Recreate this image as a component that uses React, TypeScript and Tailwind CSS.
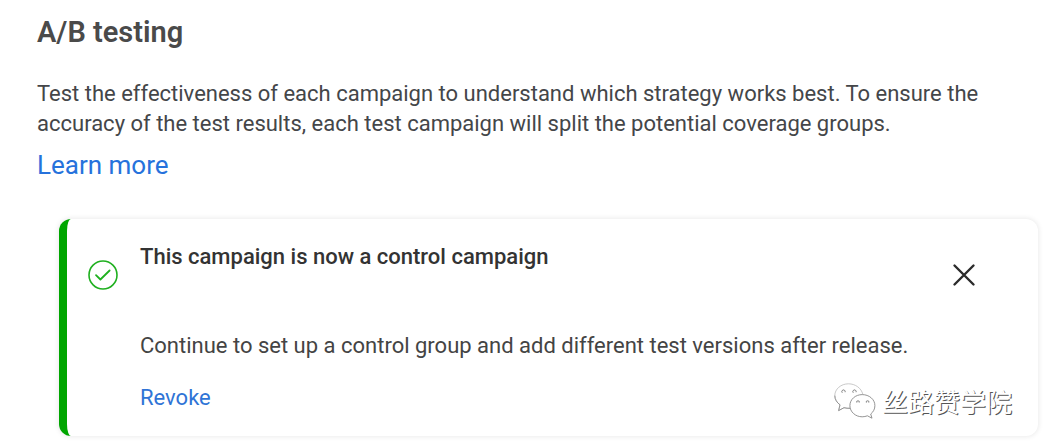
const Watermark = () => (
  <div className="pointer-events-none absolute right-[26px] bottom-[17px] flex items-center gap-1.5">
    <svg className="h-9 w-[42px]" viewBox="0 0 42 36" fill="#ffffff" aria-hidden="true">
      <path
        d="M28.800 11.200C27.300 5.200 21.400 0.800 14.500 0.800 7 0.800 0.800 6 0.800 12.600c0 3.800 2.100 7 5.200 9.200L4.600 27.600l5.400-2.900c1.900.500 4 .7 6 .6"
        stroke="#bbbbbb"
        strokeWidth="0.8"
      />
      <path d="M0.800 12.600c0 3.800 2.100 7 5.200 9.200L4.600 27.600l5.400-2.900c1.900.500 4 .7 6 .6" fill="none" stroke="#888888" strokeWidth="0.8" />
      <path
        d="M28.200 11.600c-6.800 0-12.300 4.800-12.300 11s5.500 11.200 12.300 11.200c1.800 0 3.600-.4 5.200-1l4.600 2.400-1.300-4.200c2.600-2 4.200-5 4.200-8.400 0-6.200-5.700-11-12.700-11z"
        stroke="#888888"
        strokeWidth="0.9"
      />
      <path
        d="M8.300 9.800a1.700 1.700 0 1 1 2.800-.6M19.300 9.800a1.700 1.700 0 1 1 2.800-.6M22.800 19.600a1.300 1.300 0 1 1 2.400 0M32.400 19.600a1.300 1.300 0 1 1 2.400 0"
        fill="none"
        stroke="#666666"
        strokeWidth="0.8"
      />
    </svg>
    <span className="font-['Noto_Sans_CJK_SC',sans-serif] text-[26px] leading-9 text-white [text-shadow:1px_1px_0_#555555]">
      丝路赞学院
    </span>
  </div>
);

const ControlCampaignNotice = () => (
  <section className="relative mt-9 mr-[7px] ml-[59px] flex items-start rounded-xl border-l-8 border-[#00a600] bg-white pt-[23px] pr-[62px] pb-[23px] pl-[21px] shadow-[0_0_5px_1px_rgba(0,0,0,0.08)]">
    <svg className="mt-[18px] size-[30px] shrink-0" viewBox="0 0 30 30" fill="none" stroke="#1fb01f" aria-hidden="true">
      <circle cx="15" cy="15" r="14" strokeWidth="1.6" />
      <path d="M8 15.2l4.4 4.3 9.2-9" strokeWidth="1.8" strokeLinecap="round" strokeLinejoin="round" />
    </svg>
    <div className="ml-[22px] min-w-0 flex-1">
      <h2 className="font-medium text-[#333333]">This campaign is now a control campaign</h2>
      <p className="mt-[59px] text-[#444444]">
        Continue to set up a control group and add different test versions after release.
      </p>
      <button type="button" className="mt-[22px] block text-[#2f74d6]">
        Revoke
      </button>
    </div>
    <button type="button" aria-label="Close" className="mt-[21px] shrink-0">
      <svg className="size-6" viewBox="0 0 24 24" fill="none" stroke="#2b2b2b" strokeWidth="2.4" strokeLinecap="round">
        <path d="M2.5 2.5l19 19M21.5 2.5l-19 19" />
      </svg>
    </button>
    <Watermark />
  </section>
);

export default function App() {
  return (
    <main className="min-h-screen bg-white pt-3.5 pb-2.5 font-['Roboto',sans-serif] text-[22px] leading-[30px]">
      <header className="px-[37px]">
        <h1 className="text-[29px] leading-9 font-semibold text-[#4a4a4a]">A/B testing</h1>
        <p className="mt-[29px] text-[#444649]">
          Test the effectiveness of each campaign to understand which strategy works best. To ensure the accuracy of
          the test results, each test campaign will split the potential coverage groups.
        </p>
        <a href="#learn-more" className="mt-2 inline-block align-top text-[26px] leading-9 text-[#2672dc]">
          Learn more
        </a>
      </header>
      <ControlCampaignNotice />
    </main>
  );
}
